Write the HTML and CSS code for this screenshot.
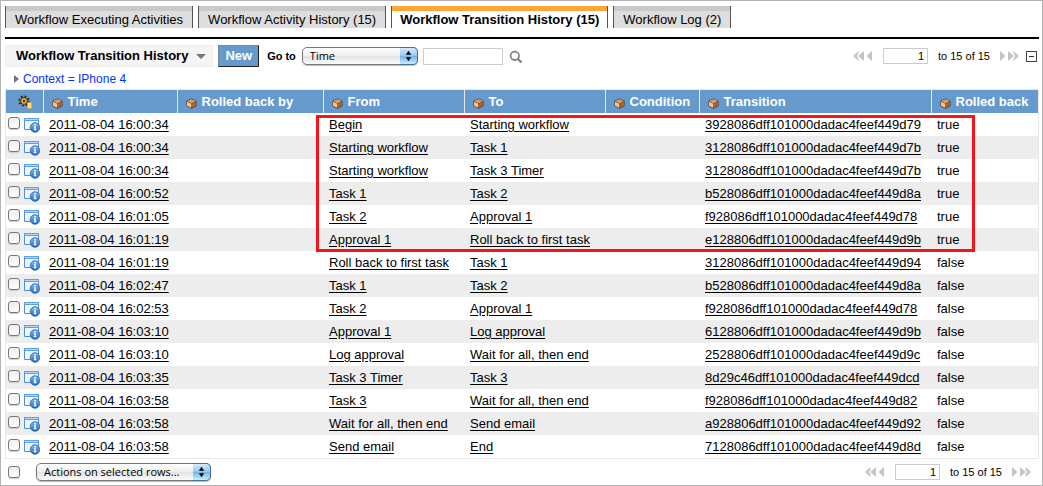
FILE: index.html
```html
<!DOCTYPE html>
<html lang="en">
<head>
<meta charset="utf-8">
<title>Workflow Transition History</title>
<link rel="stylesheet" href="styles.css">
</head>
<body>
<svg class="defs" aria-hidden="true">
  <defs>
    <linearGradient id="blueball" x1="0" y1="0" x2="0" y2="1"><stop offset="0" stop-color="#7fb8f0"/><stop offset="1" stop-color="#2068c0"/></linearGradient>
    <symbol id="cube" viewBox="0 0 11 11">
      <path d="M5.500 .5 10.500 3v5L5.500 10.700 .5 8V3z" fill="#4a2c14"/>
      <path d="M5.500 1 10 3.200 5.500 5.400 1 3.200z" fill="#d99b66"/>
      <path d="M1 3.700 5.400 5.800V10L1 7.700z" fill="#f5c48e"/>
      <path d="M10 3.700 5.700 5.800V10L10 7.700z" fill="#a8662f"/>
    </symbol>
    <symbol id="info" viewBox="0 0 16 16">
      <path d="M.5 1.500h14v11H.5z" fill="#eef6ff" stroke="#4c8fdc"/>
      <path d="M0 1h15v3H0z" fill="#5d9ee8"/><path d="M1 2h13v1H1z" fill="#b9d8f8"/>
      <circle cx="11" cy="10.500" r="4.800" fill="url(#blueball)" stroke="#2468bb" stroke-width=".8"/>
      <path d="M10.300 7h1.600v1.400h-1.600zM9.800 9.300h2v3h.7v1H9.700v-1h.6v-2h-.5z" fill="#fff"/>
    </symbol>
    <symbol id="prev" viewBox="0 0 20 10"><path d="M5.500 0v2.500L3.500 5l2 2.500V10L0 5zM11 0v10L5.500 5zM19 0v10l-5.500-5z" fill="#c4c4c4"/><path d="M5.500 2.500v5L3.500 5z" fill="#e4e4e4"/></symbol>
    <symbol id="next" viewBox="0 0 20 10"><path d="M14.500 0v2.500l2 2.500-2 2.500V10L20 5zM9 0v10l5.500-5zM1 0v10l5.500-5z" fill="#c4c4c4"/><path d="M14.500 2.500v5l2-2.500z" fill="#e4e4e4"/></symbol>
  </defs>
</svg>
<main class="frame">
  <nav class="tabs">
    <button class="tab">Workflow Executing Activities</button>
    <button class="tab">Workflow Activity History (15)</button>
    <button class="tab tab-active">Workflow Transition History (15)</button>
    <button class="tab">Workflow Log (2)</button>
  </nav>
  <section class="list">
    <div class="toolbar">
      <button class="title">Workflow Transition History <span class="caret"></span></button>
      <button class="new">New</button>
      <label class="goto" for="field">Go to</label>
      <span class="picker"><select id="field"><option>Time</option></select><svg viewBox="0 0 18 18" aria-hidden="true"><path d="M9 3l3 4.500H6zM9 15l3-4.500H6z"/></svg></span>
      <input class="search" type="text" aria-label="Search">
      <button class="icon-btn" aria-label="Go"><svg width="14" height="16" viewBox="0 0 14 16"><circle cx="5.800" cy="7.800" r="4.200" fill="none" stroke="#858585" stroke-width="1.800"/><path d="M9 11l3.500 3.500" stroke="#858585" stroke-width="2.400"/></svg></button>
      <div class="pager">
        <button class="icon-btn" aria-label="Previous page"><svg width="20" height="10"><use href="#prev"/></svg></button>
        <input class="page" type="text" value="1" aria-label="First row">
        <span class="range">to 15 of 15</span>
        <button class="icon-btn" aria-label="Next page"><svg width="20" height="10"><use href="#next"/></svg></button>
        <button class="collapse" aria-label="Collapse"></button>
      </div>
    </div>
    <a class="context" href="#"><span class="arrow"></span>Context = IPhone 4</a>
    <div class="grid">
      <table>
        <colgroup><col class="c-tools"><col class="c-time"><col class="c-by"><col class="c-step"><col class="c-step"><col class="c-cond"><col class="c-trans"><col></colgroup>
        <thead><tr>
          <th class="tools"><svg class="gear" width="16" height="14" viewBox="0 0 16 14"><circle cx="6" cy="6" r="4.600" fill="none" stroke="#2f2410" stroke-width="2" stroke-dasharray="1.800 1.810"/><circle cx="6" cy="6" r="3.400" fill="#e9b64e" stroke="#3d2e12"/><circle cx="6" cy="6" r="1.200" fill="#352710"/><rect x="9.500" y="7.500" width="4" height="6" rx="1" fill="#ffd78a" stroke="#f0a63c"/></svg></th>
          <th><svg class="cube"><use href="#cube"/></svg>Time</th>
          <th><svg class="cube"><use href="#cube"/></svg>Rolled back by</th>
          <th><svg class="cube"><use href="#cube"/></svg>From</th>
          <th><svg class="cube"><use href="#cube"/></svg>To</th>
          <th><svg class="cube"><use href="#cube"/></svg>Condition</th>
          <th><svg class="cube"><use href="#cube"/></svg>Transition</th>
          <th><svg class="cube"><use href="#cube"/></svg>Rolled back</th>
        </tr></thead>
        <tbody id="rows"></tbody>
      </table>
      <div class="highlight"></div>
    </div>
    <div class="footer">
      <input class="check" type="checkbox" aria-label="Select all rows">
      <span class="picker picker-wide"><select aria-label="Actions"><option>Actions on selected rows...</option></select><svg viewBox="0 0 18 18" aria-hidden="true"><path d="M9 3l3 4.500H6zM9 15l3-4.500H6z"/></svg></span>
      <div class="pager">
        <button class="icon-btn" aria-label="Previous page"><svg width="20" height="10"><use href="#prev"/></svg></button>
        <input class="page" type="text" value="1" aria-label="First row">
        <span class="range">to 15 of 15</span>
        <button class="icon-btn" aria-label="Next page"><svg width="20" height="10"><use href="#next"/></svg></button>
      </div>
    </div>
  </section>
</main>
<script src="rows.js"></script>
</body>
</html>
```
FILE: styles.css
```css
* { box-sizing: border-box; }
body { margin: 0; background: #fff; color: #000; font: 13px/16px "Liberation Sans", Arial, sans-serif; }
button, input, select { font: inherit; color: inherit; margin: 0; }
button { border: 0; padding: 0; background: none; white-space: nowrap; }
svg { display: block; }
.defs { position: absolute; width: 0; height: 0; }
.frame { min-height: 100vh; border: 1px solid #b3b3b3; padding: 5px 3px 3px 4px; }
.tabs { display: flex; gap: 5px; padding-bottom: 9px; border-bottom: 2px solid #000; }
.tab { height: 22px; padding: 0 9px; background: #ddd; border: 0 solid #555; border-width: 0 1px; box-shadow: inset 0 5px #c9c9c9; line-height: 27px; }
.tab-active { padding: 0 8px; font-weight: bold; background: #fff; box-shadow: inset 0 5px #ffa538; }
.toolbar { display: flex; align-items: center; margin-top: 5px; height: 24px; }
.title { display: flex; align-items: center; gap: 8px; height: 22px; padding: 0 6px 0 10px; background: #f5f5f5; border: 1px solid #eee; font-weight: bold; }
.caret { border: 5px solid transparent; border-top-color: #777; border-bottom: 0; }
.new { height: 22px; margin-left: 5px; padding: 0 6px; background: #69c; color: #fff; font-weight: bold; border: 1px solid #222; border-top-color: #789; border-left-color: #789; }
.goto { margin: 0 6px 0 8px; font-size: 11px; font-weight: bold; }
.picker { position: relative; width: 116px; }
.picker select { display: block; appearance: none; width: 100%; height: 18px; padding: 0 22px 0 7px; border: 1px solid #777; border-radius: 5px; background: linear-gradient(#fff, #eee 50%, #e2e2e2 51%, #fafafa); font: 11px/14px "Open Sans", sans-serif; box-shadow: 0 1px 1px #bbb; }
.picker svg { position: absolute; top: 0; right: 0; width: 18px; height: 18px; border: 1px solid #4b7096; border-left: 0; border-radius: 0 5px 5px 0; background: linear-gradient(#d6eafb, #96c4ee 50%, #72b1e9 51%, #c4f0ff); pointer-events: none; }
.picker-wide { width: 175px; margin-left: 16px; }
.search { width: 80px; height: 17px; margin: 0 6px 0 5px; border: 1px solid #ccc; }
.pager { display: flex; align-items: center; margin-left: auto; font-size: 11px; }
.page { width: 45px; height: 16px; margin: 0 10px; padding: 0 3px; border: 1px solid #ccc; text-align: right; }
.range { margin-right: 9px; }
.collapse { width: 11px; height: 11px; margin: 0 2px 0 7px; border: 1px solid #444; background: linear-gradient(#333, #333) center / 5px 1px no-repeat; }
.context { display: flex; align-items: center; gap: 4px; width: max-content; margin: 3px 0 2px 9px; color: #03f; font-size: 12px; text-decoration: none; }
.arrow { border: 4px solid transparent; border-left: 5px solid #678; border-right: 0; }
.grid { position: relative; border: 1px solid #e8e8e8; }
table { width: 100%; border-collapse: collapse; table-layout: fixed; }
.c-tools { width: 37px; }
.c-time { width: 134px; }
.c-by { width: 146px; }
.c-step { width: 141px; }
.c-cond { width: 94px; }
.c-trans { width: 232px; }
th { height: 23px; padding: 0 0 0 8px; background: #69c; color: #fff; text-align: left; white-space: nowrap; border-left: 1px solid #e8e8e8; }
th:first-child { border-left: 0; }
th.tools { padding-left: 12px; }
.cube { display: inline-block; width: 11px; height: 11px; margin-right: 5px; vertical-align: -3px; }
td { height: 23px; padding: 0 0 0 6px; white-space: nowrap; }
tbody tr:nth-child(even) { background: #ededed; }
td a { color: #000; text-underline-offset: 2px; }
.select { display: flex; align-items: flex-start; gap: 4px; padding: 4px 0 0 2px; }
.check { appearance: none; width: 12px; height: 12px; border: 1px solid #777; border-radius: 3px; background: linear-gradient(#eee, #fff); box-shadow: 0 1px 1px #ccc; }
.info { width: 16px; height: 16px; }
.highlight { position: absolute; left: 310px; top: 25px; width: 659px; height: 137px; border: 3px solid #f4151c; pointer-events: none; }
.footer { display: flex; align-items: center; padding: 4px 8px 0 3px; }
```
FILE: rows.js
```js
const rows = [
  ["16:00:34", "Begin", "Starting workflow", "3928086dff101000dadac4feef449d79", true],
  ["16:00:34", "Starting workflow", "Task 1", "3128086dff101000dadac4feef449d7b", true],
  ["16:00:34", "Starting workflow", "Task 3 Timer", "3128086dff101000dadac4feef449d7b", true],
  ["16:00:52", "Task 1", "Task 2", "b528086dff101000dadac4feef449d8a", true],
  ["16:01:05", "Task 2", "Approval 1", "f928086dff101000dadac4feef449d78", true],
  ["16:01:19", "Approval 1", "Roll back to first task", "e128806dff101000dadac4feef449d9b", true],
  ["16:01:19", "Roll back to first task", "Task 1", "3128086dff101000dadac4feef449d94", false],
  ["16:02:47", "Task 1", "Task 2", "b528086dff101000dadac4feef449d8a", false],
  ["16:02:53", "Task 2", "Approval 1", "f928086dff101000dadac4feef449d78", false],
  ["16:03:10", "Approval 1", "Log approval", "6128806dff101000dadac4feef449d9b", false],
  ["16:03:10", "Log approval", "Wait for all, then end", "2528806dff101000dadac4feef449d9c", false],
  ["16:03:35", "Task 3 Timer", "Task 3", "8d29c46dff101000dadac4feef449dcd", false],
  ["16:03:58", "Task 3", "Wait for all, then end", "f928086dff101000dadac4feef449d82", false],
  ["16:03:58", "Wait for all, then end", "Send email", "a928806dff101000dadac4feef449d92", false],
  ["16:03:58", "Send email", "End", "7128086dff101000dadac4feef449d8d", false]
];
const link = text => `<a href="#">${text}</a>`;
document.getElementById("rows").innerHTML = rows.map(([time, from, to, id, back]) => `<tr>
  <td class="select"><input class="check" type="checkbox" aria-label="Select row"><svg class="info"><use href="#info"/></svg></td>
  <td>${link("2011-08-04 " + time)}</td><td></td><td>${link(from)}</td><td>${link(to)}</td><td></td><td>${link(id)}</td><td>${back}</td></tr>`).join("");
```
